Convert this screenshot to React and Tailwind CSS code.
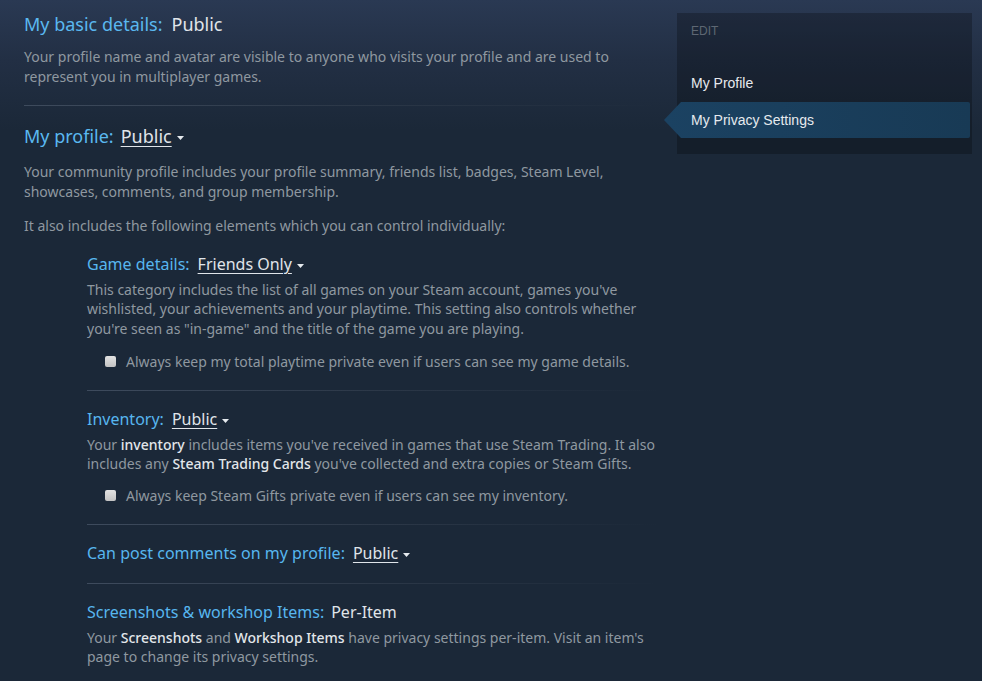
const Caret = () => (
  <svg width="7" height="4" viewBox="0 0 7 4" className="ml-[5px] mt-[4px] inline-block">
    <path d="M0 0 L7 0 L3.5 4 Z" fill="#e6ebef" />
  </svg>
);

const Divider = () => (
  <div className="h-px w-full bg-[linear-gradient(to_right,#3e4b5d_0%,#2c3848_50%,transparent_100%)]" />
);

const Hl = ({ children }) => <span className="font-medium text-[#e2e6ea]">{children}</span>;

const Checkbox = ({ label }) => (
  <label className="flex items-center pl-[18px] leading-[20px] text-[14px] text-[#8f98a0]">
    <span className="w-[11px] h-[11px] rounded-[2px] bg-[linear-gradient(180deg,#e2e2e2,#c3c3c3)] mr-[10px] shrink-0" />
    {label}
  </label>
);

const SubTitle = ({ label, value, dropdown }) => (
  <div className="flex items-center leading-[22px] text-[16px]">
    <span className="text-[#57b6ef]">{label}</span>
    {dropdown ? (
      <>
        <span className="ml-[8px] text-[#e0e5ea] underline underline-offset-[3px] decoration-1">{value}</span>
        <Caret />
      </>
    ) : (
      <span className="ml-[7px] text-[#e0e5ea]">{value}</span>
    )}
  </div>
);

export default function App() {
  return (
    <div
      className="min-h-screen w-full bg-[#1b2838] bg-[linear-gradient(180deg,#2a3953_0px,#222f44_60px,#1b2838_130px)]"
      style={{ fontFamily: "'Noto Sans', 'Open Sans', sans-serif" }}
    >
      <div className="flex">
        {/* ── Main settings column ── */}
        <div className="w-[660px] pl-[24px] pt-[12px] text-[14px] leading-[19.6px] text-[#8f98a0]">
          <div className="flex items-center leading-[24px] text-[18px]">
            <span className="text-[#5ab8f0]">My basic details:</span>
            <span className="ml-[9px] text-[#e0e5ea]">Public</span>
          </div>
          <p className="mt-[11px] leading-[20px]">
            Your profile name and avatar are visible to anyone who visits your profile and are used to
            represent you in multiplayer games.
          </p>
          <div className="mt-[18px]">
            <Divider />
          </div>

          <div className="mt-[18px] flex items-center leading-[24px] text-[18px]">
            <span className="text-[#5ab8f0]">My profile:</span>
            <span className="ml-[7px] text-[#e0e5ea] underline underline-offset-[3px] decoration-1">Public</span>
            <Caret />
          </div>
          <p className="mt-[14px]">
            Your community profile includes your profile summary, friends list, badges, Steam Level,
            showcases, comments, and group membership.
          </p>
          <p className="mt-[15px]">It also includes the following elements which you can control individually:</p>

          <div className="ml-[63px] mt-[17px]">
            <SubTitle label="Game details:" value="Friends Only" dropdown />
            <p className="mt-[5px]">
              This category includes the list of all games on your Steam account, games you've
              wishlisted, your achievements and your playtime. This setting also controls whether
              you're seen as "in-game" and the title of the game you are playing.
            </p>
            <div className="mt-[13px]">
              <Checkbox label="Always keep my total playtime private even if users can see my game details." />
            </div>
            <div className="mt-[18px]">
              <Divider />
            </div>

            <div className="mt-[17px]">
              <SubTitle label="Inventory:" value="Public" dropdown />
            </div>
            <p className="mt-[5px]">
              Your <Hl>inventory</Hl> includes items you've received in games that use Steam Trading. It also
              includes any <Hl>Steam Trading Cards</Hl> you've collected and extra copies or Steam Gifts.
            </p>
            <div className="mt-[12px]">
              <Checkbox label="Always keep Steam Gifts private even if users can see my inventory." />
            </div>
            <div className="mt-[18px]">
              <Divider />
            </div>

            <div className="mt-[17px]">
              <SubTitle label="Can post comments on my profile:" value="Public" dropdown />
            </div>
            <div className="mt-[19px]">
              <Divider />
            </div>

            <div className="mt-[17px]">
              <SubTitle label="Screenshots & workshop Items:" value="Per-Item" />
            </div>
            <p className="mt-[5px] pb-[20px]">
              Your <Hl>Screenshots</Hl> and <Hl>Workshop Items</Hl> have privacy settings per-item. Visit an item's
              page to change its privacy settings.
            </p>
          </div>
        </div>

        {/* ── Right side nav ── */}
        <div
          className="ml-[17px] mt-[13px] w-[295px] self-start bg-black/25 pt-[10px] pb-[16px]"
          style={{ fontFamily: "'Liberation Sans', Arial, sans-serif" }}
        >
          <div className="pl-[14px] text-[12px] leading-[16px] text-[#5e6773]">EDIT</div>
          <div className="mt-[26px] pl-[14px] h-[36px] flex items-center text-[14px] text-[#e6eaee]">My Profile</div>
          <div className="mt-px -ml-[13px] mr-[2px] h-[36px] flex items-center pl-[27px] text-[14px] text-[#e6eaee] rounded-r-[2px] bg-[linear-gradient(90deg,#1b4262,#183a55)] [clip-path:polygon(17px_0,100%_0,100%_100%,17px_100%,0_50%)]">
            My Privacy Settings
          </div>
        </div>
      </div>
    </div>
  );
}
